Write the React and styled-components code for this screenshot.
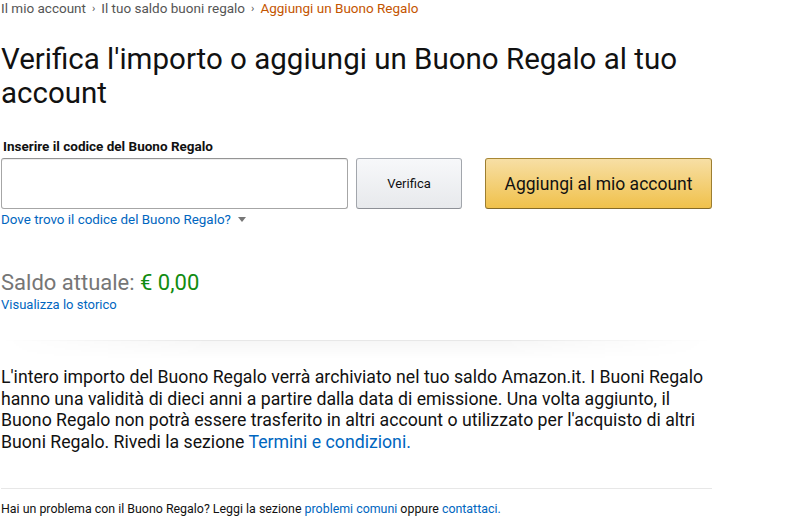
import React from "react";
import styled, { createGlobalStyle } from "styled-components";

const GlobalStyle = createGlobalStyle`
  body {
    margin: 0;
    background: #fff;
    font-family: Roboto, "Liberation Sans", sans-serif;
    color: #111;
  }
`;

const App = () => {
  return (
    <Page>
      <GlobalStyle />
      <Breadcrumb>
        <Crumb>Il mio account</Crumb>
        <Sep>›</Sep>
        <Crumb>Il tuo saldo buoni regalo</Crumb>
        <Sep>›</Sep>
        <Crumb active>Aggiungi un Buono Regalo</Crumb>
      </Breadcrumb>
      <Title>Verifica l'importo o aggiungi un Buono Regalo al tuo account</Title>
      <Label>Inserire il codice del Buono Regalo</Label>
      <FormRow>
        <CodeInput type="text" />
        <VerifyButton>Verifica</VerifyButton>
        <AddButton>Aggiungi al mio account</AddButton>
      </FormRow>
      <HelpLink>
        Dove trovo il codice del Buono Regalo?
        <Caret />
      </HelpLink>
      <Balance>
        Saldo attuale: <Amount>€ 0,00</Amount>
      </Balance>
      <SmallLink>Visualizza lo storico</SmallLink>
      <ShadowDivider />
      <Info>
        L'intero importo del Buono Regalo verrà archiviato nel tuo saldo
        Amazon.it. I Buoni Regalo hanno una validità di dieci anni a partire
        dalla data di emissione. Una volta aggiunto, il Buono Regalo non potrà
        essere trasferito in altri account o utilizzato per l'acquisto di altri
        Buoni Regalo. Rivedi la sezione <InlineLink>Termini e condizioni.</InlineLink>
      </Info>
      <Rule />
      <Footer>
        Hai un problema con il Buono Regalo? Leggi la sezione{" "}
        <InlineLink>problemi comuni</InlineLink> oppure{" "}
        <InlineLink>contattaci.</InlineLink>
      </Footer>
    </Page>
  );
};

const Page = styled.div`
  width: 711px;
  padding: 0 0 0 1px;
`;
const Breadcrumb = styled.div`
  display: flex;
  align-items: center;
  gap: 6px;
  height: 18px;
  font-size: 13.5px;
  margin-top: -1px;
`;
const Crumb = styled.span`
  color: ${(p) => (p.active ? "#c45500" : "#555")};
`;
const Sep = styled.span`
  color: #555;
  font-size: 11px;
`;
const Title = styled.h1`
  margin: 25px 0 0;
  font-size: 29.5px;
  font-weight: 400;
  line-height: 34px;
  color: #111;
  width: 700px;
`;
const Label = styled.div`
  margin-top: 28px;
  font-size: 13.5px;
  font-weight: 700;
  line-height: 16px;
  padding-left: 2px;
`;
const FormRow = styled.div`
  display: flex;
  align-items: center;
  margin-top: 4px;
  height: 51px;
`;
const CodeInput = styled.input`
  box-sizing: border-box;
  width: 347px;
  height: 51px;
  border: 1px solid #a6a6a6;
  border-top-color: #949494;
  border-radius: 3px;
  box-shadow: 0 1px 0 rgba(255, 255, 255, 0.5), 0 1px 0 rgba(0, 0, 0, 0.07) inset;
  margin: 0;
  outline: none;
`;
const VerifyButton = styled.button`
  box-sizing: border-box;
  margin-left: 8px;
  width: 106px;
  height: 51px;
  border: 1px solid #adb1b8;
  border-color: #adb1b8 #a2a6ac #8d9096;
  border-radius: 3px;
  background: linear-gradient(to bottom, #f7f8fa, #e7e9ec);
  font-family: inherit;
  font-size: 13px;
  color: #111;
`;
const AddButton = styled.button`
  box-sizing: border-box;
  margin-left: 23px;
  width: 227px;
  height: 51px;
  border: 1px solid #a88734;
  border-color: #a88734 #9c7e31 #846a29;
  border-radius: 3px;
  background: linear-gradient(to bottom, #f7dfa5, #f0c14b);
  font-family: inherit;
  font-size: 17.5px;
  color: #111;
`;
const HelpLink = styled.div`
  display: flex;
  align-items: center;
  gap: 7px;
  margin-top: 2px;
  font-size: 13.4px;
  line-height: 17px;
  color: #0066c0;
`;
const Caret = styled.span`
  width: 0;
  height: 0;
  border-left: 4px solid transparent;
  border-right: 4px solid transparent;
  border-top: 5px solid #777;
`;
const Balance = styled.div`
  margin-top: 42px;
  font-size: 22px;
  line-height: 26px;
  color: #767676;
`;
const Amount = styled.span`
  color: #118c11;
`;
const SmallLink = styled.div`
  font-size: 13px;
  line-height: 17px;
  color: #0066c0;
`;
const ShadowDivider = styled.div`
  margin-top: 27px;
  height: 26px;
  border-top: 1px solid #e7e7e7;
  background: linear-gradient(to bottom, rgba(0, 0, 0, 0.035), rgba(0, 0, 0, 0) 70%);
  -webkit-mask-image: linear-gradient(to right, transparent, #000 30%, #000 70%, transparent);
  mask-image: linear-gradient(to right, transparent, #000 30%, #000 70%, transparent);
`;
const Info = styled.p`
  margin: 0;
  font-size: 17.7px;
  line-height: 21.5px;
  color: #111;
`;
const InlineLink = styled.span`
  color: #0066c0;
`;
const Rule = styled.div`
  margin-top: 35px;
  border-top: 1px solid #e7e7e7;
`;
const Footer = styled.div`
  margin-top: 12px;
  font-size: 12.4px;
  line-height: 15px;
  color: #111;
`;

export default App;
